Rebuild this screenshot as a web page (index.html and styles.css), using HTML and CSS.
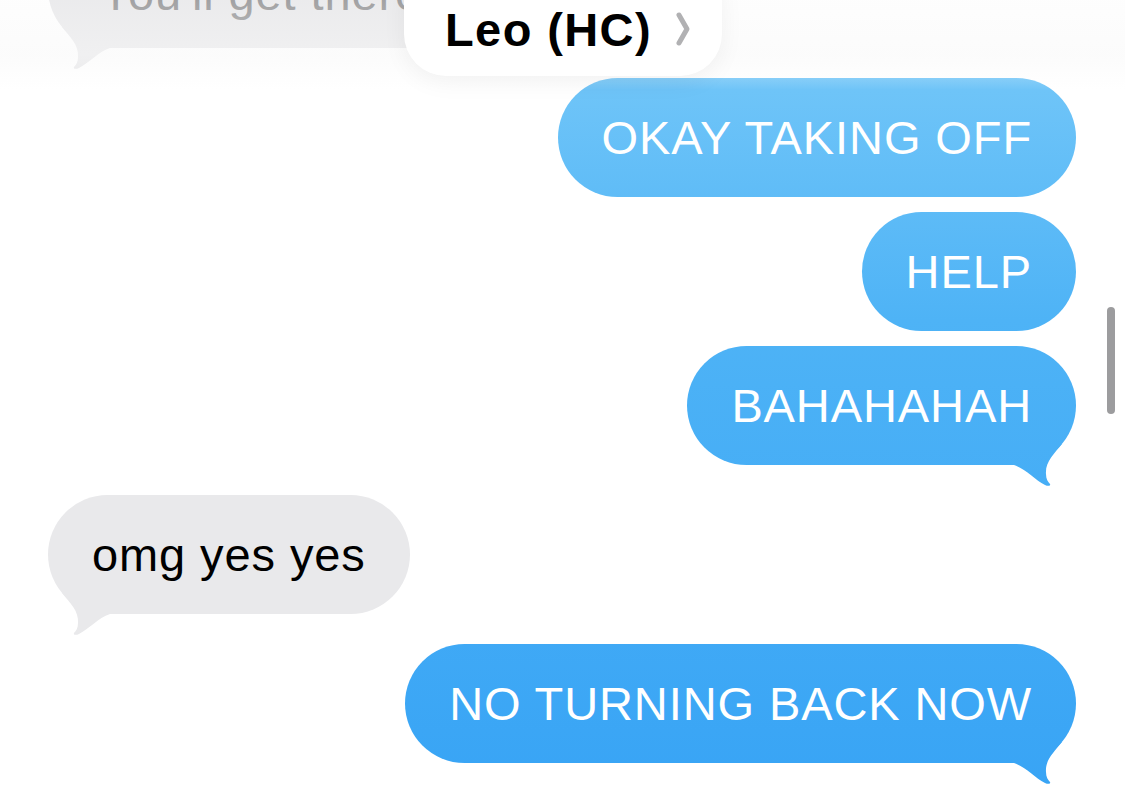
FILE: index.html
```html
<!DOCTYPE html>
<html lang="en">
<head>
    <meta charset="UTF-8">
    <meta name="viewport" content="width=device-width, initial-scale=1.0">
    <title>Leo (HC)</title>
    <link rel="stylesheet" href="styles.css">
</head>
<body>
    <div class="screen">
        <div class="thread">
            <div class="row them faded">
                <div class="bubble gray tail">You'll get there</div>
            </div>
            <div class="row me new-sender">
                <div class="bubble blue">OKAY TAKING OFF</div>
            </div>
            <div class="row me">
                <div class="bubble blue">HELP</div>
            </div>
            <div class="row me">
                <div class="bubble blue tail">BAHAHAHAH</div>
            </div>
            <div class="row them new-sender">
                <div class="bubble gray tail">omg yes yes</div>
            </div>
            <div class="row me new-sender">
                <div class="bubble blue tail">NO TURNING BACK NOW</div>
            </div>
        </div>

        <header class="nav">
            <div class="avatar"></div>
            <div class="name-pill">
                <span class="name">Leo (HC)</span>
                <svg class="chevron" width="16" height="36" viewBox="0 0 16 36">
                    <path d="M4 4 L12 18 L4 32" fill="none" stroke="#b1b1b3" stroke-width="5" stroke-linecap="round" stroke-linejoin="round"/>
                </svg>
            </div>
        </header>

        <div class="scrollbar"></div>
    </div>
</body>
</html>
```

FILE: styles.css
```css
body {
    margin: 0;
    background: #fff;
    font-family: 'Liberation Sans', Arial, sans-serif;
}
.screen {
    position: relative;
    width: 1125px;
    height: 794px;
    overflow: hidden;
    background: #fff;
}
.thread {
    display: flex;
    flex-direction: column;
    gap: 15px;
    margin-top: -71px;
    padding: 0 49px 0 48px;
}
.row {
    display: flex;
}
.row.me {
    justify-content: flex-end;
}
.row.them {
    justify-content: flex-start;
}
.row.new-sender {
    margin-top: 15px;
}
.bubble {
    position: relative;
    height: 119px;
    box-sizing: border-box;
    padding: 0 44px;
    border-radius: 60px;
    font-size: 47px;
    line-height: 119px;
    letter-spacing: 0.9px;
    white-space: nowrap;
}
.bubble.blue {
    color: #fff;
    background: linear-gradient(to bottom, #70c5f8 78px, #4eb3f6 320px, #38a4f5 794px) fixed;
}
.bubble.gray {
    color: #000;
    background: #e9e9eb;
}
.bubble.tail::after {
    content: '';
    position: absolute;
    bottom: -21px;
    width: 50px;
    height: 42px;
    background: inherit;
    clip-path: path('M0 0 H48 C40 10 31 18 32 30 C32 35 34 38 36 40 C37 42 34 42.5 31 41 C21 36 12 25 0 21 Z');
}
.bubble.blue.tail::after {
    right: 12px;
}
.bubble.gray.tail::after {
    left: 12px;
    transform: scaleX(-1);
}
.faded .bubble {
    width: 440px;
    padding-left: 52px;
    line-height: 130px;
    color: #8c8c8e;
    background: #e8e8ea;
}
.nav {
    position: absolute;
    top: 0;
    left: 0;
    right: 0;
    height: 90px;
    background: linear-gradient(to bottom, rgba(247, 247, 247, 0.2) 0, rgba(248, 248, 248, 0.5) 55px, rgba(255, 255, 255, 0) 90px);
}
.avatar {
    position: absolute;
    top: -70px;
    left: 515px;
    width: 96px;
    height: 80px;
    border-radius: 50%;
    background: #f1b5b5;
    filter: blur(8px);
    opacity: 0.6;
}
.name-pill {
    position: absolute;
    top: -40px;
    left: 404px;
    width: 318px;
    height: 116px;
    box-sizing: border-box;
    padding: 22px 0 0 41px;
    display: flex;
    align-items: center;
    gap: 23px;
    background: #fff;
    border-radius: 42px;
    box-shadow: 0 6px 24px rgba(0, 0, 0, 0.05);
}
.name {
    font-size: 47px;
    font-weight: bold;
    color: #000;
    letter-spacing: 1.4px;
}
.scrollbar {
    position: absolute;
    top: 307px;
    left: 1107px;
    width: 8px;
    height: 107px;
    border-radius: 4px;
    background: #9c9c9e;
}
```
